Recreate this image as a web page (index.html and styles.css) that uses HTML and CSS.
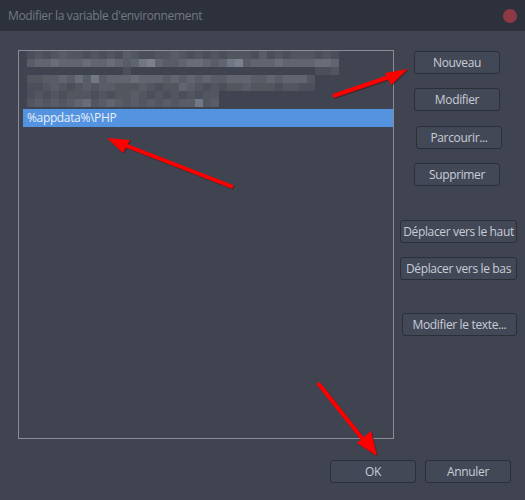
FILE: index.html
```html
<!DOCTYPE html>
<html lang="fr">
<head>
<meta charset="utf-8">
<title>Modifier la variable d'environnement</title>
<link rel="stylesheet" href="styles.css">
</head>
<body>
<div class="window">
  <div class="titlebar">
    <span class="title">Modifier la variable d'environnement</span>
    <span class="close"></span>
  </div>
  <div class="body">
    <div class="main">
      <div class="list">
        <div class="mosaic">
          <div class="mrow"><i class="b"></i><i class="c"></i><i class="b"></i><i class="c"></i><i class="d"></i><i class="c"></i><i class="c"></i><i class="b"></i><i class="c"></i><i class="b"></i><i class="c"></i><i class="b"></i><i class="d"></i><i class="c"></i><i class="b"></i><i class="b"></i><i class="c"></i><i class="c"></i><i class="d"></i><i class="c"></i><i class="b"></i><i class="c"></i><i class="b"></i><i class="c"></i><i class="b"></i><i class="c"></i><i class="c"></i><i class="c"></i><i class="b"></i><i class="d"></i><i class="b"></i><i class="c"></i><i class="b"></i><i class="c"></i><i class="c"></i><i class="c"></i><i class="b"></i><i class="c"></i><i class="b"></i></div>
          <div class="mrow"><i class="d"></i><i class="e"></i><i class="e"></i><i class="f"></i><i class="e"></i><i class="e"></i><i class="e"></i><i class="f"></i><i class="e"></i><i class="e"></i><i class="f"></i><i class="e"></i><i class="d"></i><i class="e"></i><i class="g"></i><i class="h"></i><i class="e"></i><i class="d"></i><i class="d"></i><i class="e"></i><i class="f"></i><i class="f"></i><i class="e"></i><i class="d"></i><i class="e"></i><i class="g"></i><i class="h"></i><i class="d"></i><i class="e"></i><i class="e"></i><i class="e"></i><i class="f"></i><i class="e"></i><i class="e"></i><i class="e"></i><i class="e"></i><i class="f"></i><i class="f"></i><i class="e"></i></div>
          <div class="mrow"><i class="n"></i><i class="n"></i><i class="n"></i><i class="n"></i><i class="n"></i><i class="n"></i><i class="n"></i><i class="n"></i><i class="n"></i><i class="n"></i><i class="n"></i><i class="n"></i><i class="b"></i><i class="n"></i><i class="n"></i><i class="n"></i><i class="n"></i><i class="n"></i><i class="n"></i><i class="n"></i><i class="n"></i><i class="n"></i><i class="n"></i><i class="n"></i><i class="n"></i><i class="n"></i><i class="n"></i><i class="n"></i><i class="n"></i><i class="n"></i><i class="n"></i><i class="n"></i><i class="n"></i><i class="n"></i><i class="n"></i><i class="n"></i><i class="b"></i><i class="b"></i><i class="c"></i></div>
          <div class="mrow"><i class="c"></i><i class="c"></i><i class="d"></i><i class="d"></i><i class="e"></i><i class="d"></i><i class="f"></i><i class="d"></i><i class="g"></i><i class="d"></i><i class="e"></i><i class="e"></i><i class="e"></i><i class="f"></i><i class="e"></i><i class="e"></i><i class="e"></i><i class="d"></i><i class="e"></i><i class="d"></i><i class="e"></i><i class="d"></i><i class="e"></i><i class="d"></i><i class="d"></i><i class="e"></i><i class="e"></i><i class="e"></i><i class="d"></i><i class="d"></i><i class="e"></i><i class="d"></i><i class="e"></i><i class="e"></i><i class="e"></i><i class="c"></i></div>
          <div class="mrow"><i class="b"></i><i class="b"></i><i class="c"></i><i class="d"></i><i class="c"></i><i class="b"></i><i class="c"></i><i class="d"></i><i class="c"></i><i class="d"></i><i class="d"></i><i class="c"></i><i class="c"></i><i class="c"></i><i class="d"></i><i class="c"></i><i class="b"></i><i class="c"></i><i class="c"></i><i class="e"></i><i class="d"></i><i class="c"></i><i class="b"></i><i class="c"></i><i class="b"></i><i class="c"></i><i class="c"></i><i class="d"></i><i class="c"></i><i class="c"></i><i class="c"></i><i class="b"></i><i class="c"></i><i class="c"></i><i class="b"></i><i class="b"></i></div>
          <div class="mrow"><i class="b"></i><i class="c"></i><i class="b"></i><i class="c"></i><i class="b"></i><i class="c"></i><i class="c"></i><i class="c"></i><i class="b"></i><i class="c"></i><i class="b"></i><i class="c"></i><i class="c"></i><i class="d"></i><i class="c"></i><i class="b"></i><i class="c"></i><i class="b"></i><i class="c"></i><i class="b"></i><i class="c"></i><i class="b"></i><i class="c"></i><i class="c"></i></div>
          <div class="mrow"><i class="c"></i><i class="d"></i><i class="c"></i><i class="d"></i><i class="c"></i><i class="d"></i><i class="e"></i><i class="f"></i><i class="c"></i><i class="d"></i><i class="e"></i><i class="d"></i><i class="c"></i><i class="d"></i><i class="c"></i><i class="d"></i><i class="c"></i><i class="d"></i><i class="c"></i><i class="d"></i><i class="d"></i><i class="g"></i><i class="c"></i><i class="d"></i></div>
        </div>
        <div class="item sel">%appdata%\PHP</div>
      </div>
      <div class="side">
        <button class="btn sm nouveau">Nouveau</button>
        <button class="btn sm modifier">Modifier</button>
        <button class="btn sm parcourir">Parcourir...</button>
        <button class="btn sm supprimer">Supprimer</button>
        <button class="btn wide haut">Déplacer vers le haut</button>
        <button class="btn wide bas">Déplacer vers le bas</button>
        <button class="btn texte">Modifier le texte...</button>
      </div>
    </div>
    <div class="footer">
      <button class="btn sm">OK</button>
      <button class="btn sm">Annuler</button>
    </div>
  </div>
  <svg class="arrows" width="525" height="500" viewBox="0 0 525 500">
    <g class="shadow" transform="translate(1,1)">
      <line x1="333" y1="96" x2="392" y2="76"/>
      <polygon points="408,69 385,73 391,85"/>
      <line x1="233" y1="187" x2="122" y2="144"/>
      <polygon points="107,138 130,140 123,153"/>
      <line x1="318" y1="383" x2="365" y2="442"/>
      <polygon points="377,456 357,443 371,431"/>
    </g>
    <g class="red">
      <line x1="333" y1="96" x2="392" y2="76"/>
      <polygon points="408,69 385,73 391,85"/>
      <line x1="233" y1="187" x2="122" y2="144"/>
      <polygon points="107,138 130,140 123,153"/>
      <line x1="318" y1="383" x2="365" y2="442"/>
      <polygon points="377,456 357,443 371,431"/>
    </g>
  </svg>
</div>
</body>
</html>
```
FILE: styles.css
```css
html, body {
  margin: 0;
  padding: 0;
  background: #3f4450;
}
.window {
  position: relative;
  width: 525px;
  height: 500px;
  background: #3f4450;
  font-family: "Open Sans", "Noto Sans", sans-serif;
  font-size: 12px;
  letter-spacing: -0.35px;
  overflow: hidden;
}
.titlebar {
  height: 31px;
  background: #2c313b;
  display: flex;
  align-items: center;
  justify-content: space-between;
  padding: 0 8px;
}
.title {
  color: #737985;
  font-size: 12px;
}
.close {
  width: 14px;
  height: 14px;
  border-radius: 50%;
  background: #8e3a46;
}
.body {
  padding: 19px 14px 0 18px;
}
.main {
  display: flex;
}
.list {
  flex: none;
  box-sizing: border-box;
  width: 376px;
  height: 389px;
  border: 1px solid #898d97;
  padding-left: 4px;
}
.mosaic {
  margin-left: 4px;
}
.mrow {
  display: flex;
  height: 8px;
}
.mrow i {
  width: 8px;
  height: 8px;
  flex: none;
}
.mrow .n { background: transparent; }
.mrow .b { background: #4a4f5b; }
.mrow .c { background: #51565f; }
.mrow .d { background: #585d68; }
.mrow .e { background: #60656f; }
.mrow .f { background: #686d78; }
.mrow .g { background: #717784; }
.mrow .h { background: #7c818b; }
.item {
  height: 18px;
  line-height: 18px;
  padding-left: 4px;
  color: #e8eef8;
  white-space: nowrap;
}
.sel {
  margin-top: 2px;
  background: #5393e0;
}
.side {
  flex: none;
  display: flex;
  flex-direction: column;
  align-items: flex-start;
  margin-left: 6px;
  padding-top: 1px;
}
.btn {
  box-sizing: border-box;
  height: 23px;
  padding: 0;
  border: 1px solid #2b2f38;
  border-radius: 3px;
  background: #434857;
  color: #c9cdd6;
  font-family: "Open Sans", "Noto Sans", sans-serif;
  font-size: 12px;
  letter-spacing: -0.35px;
  line-height: 20px;
  white-space: nowrap;
}
.sm { width: 86px; }
.wide { width: 117px; }
.nouveau { margin-left: 14px; }
.modifier { margin-left: 14px; margin-top: 14px; }
.parcourir { margin-left: 16px; margin-top: 15px; }
.supprimer { margin-left: 14px; margin-top: 14px; }
.haut { margin-top: 34px; }
.bas { margin-top: 14px; }
.texte { width: 115px; margin-left: 2px; margin-top: 33px; }
.footer {
  display: flex;
  justify-content: flex-end;
  gap: 9px;
  margin-top: 21px;
}
.arrows {
  position: absolute;
  top: 0;
  left: 0;
  pointer-events: none;
}
.arrows .red line { stroke: #ff0000; stroke-width: 4; }
.arrows .red polygon { fill: #ff0000; }
.arrows .shadow line { stroke: #3a1a1e; stroke-width: 4; opacity: 0.6; }
.arrows .shadow polygon { fill: #3a1a1e; opacity: 0.6; }
```
